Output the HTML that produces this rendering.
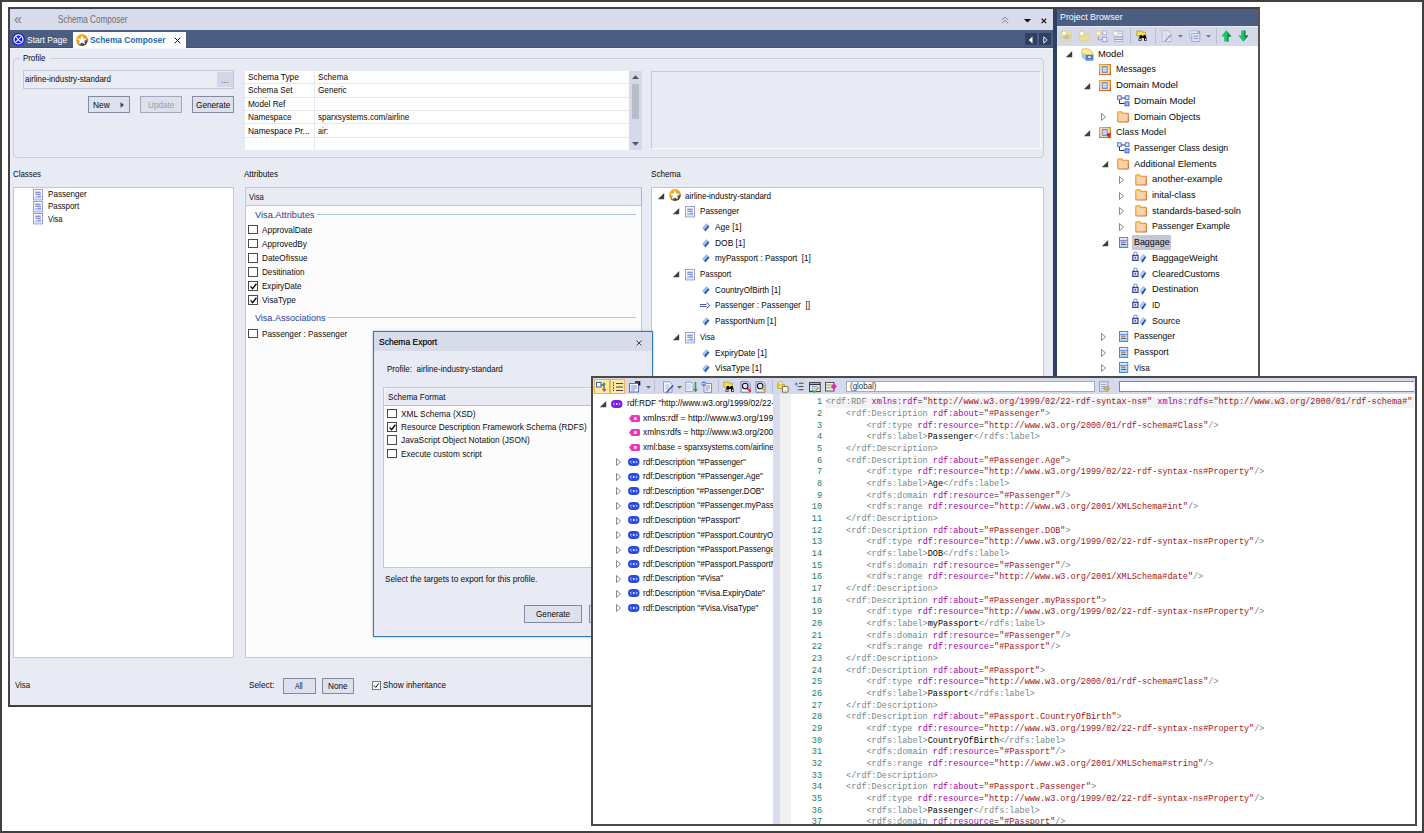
<!DOCTYPE html>
<html lang="en"><head><meta charset="utf-8"><title>Schema Composer</title><style>
html,body{margin:0;padding:0;background:#fff;}
body{width:1424px;height:833px;position:relative;overflow:hidden;font-family:"Liberation Sans",sans-serif;}
#r{position:absolute;left:0;top:0;width:1424px;height:833px;overflow:hidden;}
#r div,#r span,#r svg{position:absolute;}
#r svg{overflow:visible;display:block;}
.t{white-space:pre;line-height:14px;height:14px;transform-origin:0 50%;color:#111;}
.t.c{transform:none;}
.ln{font-family:"Liberation Mono",monospace;font-size:8.5px;line-height:12px;color:#15806a;text-align:right;white-space:pre;}
.cd{font-family:"Liberation Mono",monospace;font-size:8.5px;line-height:12px;white-space:pre;color:#111;}
.cd b{font-weight:normal;}
#frame{position:absolute;left:0;top:0;width:1424px;height:833px;box-sizing:border-box;border:2px solid #404040;pointer-events:none;}
</style></head><body><div id="r">
<svg width="0" height="0" style="left:0;top:0"><defs><linearGradient id="gstar" x1="0.2" y1="0" x2="0.75" y2="1"><stop offset="0" stop-color="#f6b21a"/><stop offset=".55" stop-color="#ee9c10"/><stop offset=".72" stop-color="#6a5a48"/><stop offset="1" stop-color="#2a2a2a"/></linearGradient><linearGradient id="gfold" x1="0" y1="0" x2="1" y2="1"><stop offset="0" stop-color="#eeb020"/><stop offset="1" stop-color="#c8602a"/></linearGradient></defs></svg>
<div style="left:8.0px;top:7.0px;width:1048.0px;height:700.0px;background:#e8ebf4;border:2px solid #424242;box-sizing:border-box;"></div>
<div style="left:10.0px;top:9.0px;width:1043.0px;height:21.0px;background:#d8dcea;"></div>
<div style="left:10.0px;top:30.0px;width:1043.0px;height:18.0px;background:#4b5d80;"></div>
<div style="left:10.0px;top:47.0px;width:1043.0px;height:1.0px;background:#41527a;"></div>
<div style="left:10.0px;top:48.0px;width:1043.0px;height:1.0px;background:#f4f5fa;"></div>
<span class="t" style="left:13.6px;top:12.3px;font-size:15px;transform:scaleX(0.95);color:#7a7a7a;">«</span>
<span class="t" style="left:57.5px;top:13.0px;font-size:10.4px;transform:scaleX(0.7814);color:#6e6e6e;">Schema Composer</span>
<svg style="left:1001.0px;top:16.0px" width="8" height="8" viewBox="0 0 8 8"><path d="M.8 4 L4 1 L7.2 4 M.8 7.4 L4 4.4 L7.2 7.4" fill="none" stroke="#8a8a80" stroke-width="1"/></svg>
<svg style="left:1024.0px;top:19.0px" width="7" height="4" viewBox="0 0 7 4"><path d="M0 0 H7 L3.5 3.6 Z" fill="#080808"/></svg>
<svg style="left:1041.0px;top:18.0px" width="6" height="6" viewBox="0 0 6 6"><path d="M.6 .6 L5.2 5.2 M5.2 .6 L.6 5.2" stroke="#111" stroke-width="1.2"/></svg>
<svg style="left:11.8px;top:33.0px" width="13" height="13" viewBox="0 0 13 13"><circle cx="6.5" cy="6.4" r="6.3" fill="#1414f4"/><circle cx="6.5" cy="6.4" r="4.5" fill="none" stroke="#fff" stroke-width="1.2"/><path d="M3.4 3.2 C6 4.5 5 7 9.6 9.6 M9.6 3.2 C8 5.5 6.4 5.8 3.4 9.6" stroke="#fff" stroke-width="1.1" fill="none"/></svg>
<span class="t" style="left:26.6px;top:33.3px;font-size:8.7px;transform:scaleX(0.979);color:#fff;">Start Page</span>
<div style="left:72.6px;top:31.6px;width:113.2px;height:16.9px;background:#fff;"></div>
<svg style="left:75.5px;top:33.9px" width="12" height="12" viewBox="0 0 12 12"><circle cx="6" cy="6" r="5.9" fill="url(#gstar)"/><polygon points="6.00,1.00 7.35,4.44 11.04,4.66 8.19,7.01 9.12,10.59 6.00,8.60 2.88,10.59 3.81,7.01 0.96,4.66 4.65,4.44" fill="#fff"/></svg>
<span class="t" style="left:89.6px;top:33.3px;font-size:8.7px;transform:scaleX(0.958);color:#1a6ab4;font-weight:bold;">Schema Composer</span>
<svg style="left:174.0px;top:36.5px" width="7" height="7" viewBox="0 0 7 7"><path d="M.7 .7 L6.3 6.3 M6.3 .7 L.7 6.3" stroke="#0c0c0c" stroke-width="1"/></svg>
<div style="left:1025.0px;top:33.3px;width:12.0px;height:11.7px;background:#2f4062;"></div>
<div style="left:1039.0px;top:33.3px;width:12.0px;height:11.7px;background:#2f4062;"></div>
<svg style="left:1028.0px;top:35.5px" width="5" height="8" viewBox="0 0 5 8"><path d="M4.5 .5 V7.5 L.8 4 Z" fill="#fff"/></svg>
<svg style="left:1042.5px;top:35.5px" width="5" height="8" viewBox="0 0 5 8"><path d="M.8 .8 V7.2 L4.2 4 Z" fill="none" stroke="#fff" stroke-width=".9"/></svg>
<div style="left:13.0px;top:58.0px;width:1031.0px;height:100.0px;border:1px solid #c9cdd9;border-radius:4px;box-sizing:border-box;"></div>
<div style="left:20.0px;top:52.0px;width:30.0px;height:12.0px;background:#e8ebf4;"></div>
<span class="t" style="left:23.0px;top:51.4px;font-size:9.8px;transform:scaleX(0.8027);color:#080808;">Profile</span>
<div style="left:23.0px;top:70.0px;width:211.0px;height:18.5px;background:#e9ecf5;border:1px solid #c3c7d3;box-sizing:border-box;"></div>
<span class="t" style="left:24.9px;top:72.0px;font-size:9.8px;transform:scaleX(0.8183);color:#0c0c0c;">airline-industry-standard</span>
<div style="left:217.0px;top:72.0px;width:15.5px;height:14.5px;background:#d3d8e8;"></div>
<span class="t" style="left:221.0px;top:72.7px;font-size:9px;transform:scaleX(1);color:#556;">...</span>
<div style="left:88.2px;top:96.3px;width:42.3px;height:16.5px;background:#dde1ee;border:1px solid #848aa0;box-sizing:border-box;"></div>
<span class="t" style="left:92.7px;top:97.7px;font-size:9.8px;transform:scaleX(0.8516);color:#080808;">New</span>
<svg style="left:119.5px;top:101.5px" width="5" height="6" viewBox="0 0 5 6"><path d="M.5 .3 L4 3 L.5 5.7 Z" fill="#444"/></svg>
<div style="left:140.0px;top:96.3px;width:42.0px;height:16.5px;background:#dde1ee;border:1px solid #a3a8ba;box-sizing:border-box;"></div>
<span class="t" style="left:147.8px;top:97.7px;font-size:9.8px;transform:scaleX(0.8324);color:#9a9ca8;">Update</span>
<div style="left:191.7px;top:96.3px;width:42.1px;height:16.5px;background:#dde1ee;border:1px solid #848aa0;box-sizing:border-box;"></div>
<span class="t" style="left:195.6px;top:97.7px;font-size:9.8px;transform:scaleX(0.8395);color:#080808;">Generate</span>
<div style="left:245.0px;top:70.7px;width:384.0px;height:78.9px;background:#fff;"></div>
<span class="t" style="left:248.4px;top:70.1px;font-size:9.8px;transform:scaleX(0.8521);color:#080808;">Schema Type</span>
<span class="t" style="left:317.9px;top:70.1px;font-size:9.8px;transform:scaleX(0.8344);color:#080808;">Schema</span>
<span class="t" style="left:248.4px;top:83.4px;font-size:9.8px;transform:scaleX(0.8337);color:#080808;">Schema Set</span>
<span class="t" style="left:317.9px;top:83.4px;font-size:9.8px;transform:scaleX(0.8364);color:#080808;">Generic</span>
<span class="t" style="left:248.4px;top:96.8px;font-size:9.8px;transform:scaleX(0.8375);color:#080808;">Model Ref</span>
<span class="t" style="left:248.4px;top:110.1px;font-size:9.8px;transform:scaleX(0.832);color:#080808;">Namespace</span>
<span class="t" style="left:317.9px;top:110.1px;font-size:9.8px;transform:scaleX(0.8292);color:#080808;">sparxsystems.com/airline</span>
<span class="t" style="left:248.4px;top:123.5px;font-size:9.8px;transform:scaleX(0.8492);color:#080808;">Namespace Pr...</span>
<span class="t" style="left:317.9px;top:123.5px;font-size:9.8px;transform:scaleX(0.7413);color:#080808;">air:</span>
<div style="left:245.0px;top:83.3px;width:384.0px;height:1.0px;background:#e6e8f1;"></div>
<div style="left:245.0px;top:96.6px;width:384.0px;height:1.0px;background:#e6e8f1;"></div>
<div style="left:245.0px;top:109.9px;width:384.0px;height:1.0px;background:#e6e8f1;"></div>
<div style="left:245.0px;top:123.2px;width:384.0px;height:1.0px;background:#e6e8f1;"></div>
<div style="left:245.0px;top:136.5px;width:384.0px;height:1.0px;background:#e6e8f1;"></div>
<div style="left:314.0px;top:70.7px;width:1.0px;height:78.9px;background:#e6e8f1;"></div>
<div style="left:629.0px;top:70.7px;width:13.0px;height:78.9px;background:#d5d9ea;"></div>
<div style="left:632.0px;top:84.0px;width:6.8px;height:34.8px;background:#b9bdc9;"></div>
<svg style="left:632.3px;top:75.0px" width="7" height="4" viewBox="0 0 7 4"><path d="M0 4 H7 L3.5 .2 Z" fill="#555"/></svg>
<svg style="left:632.3px;top:141.5px" width="7" height="4" viewBox="0 0 7 4"><path d="M0 0 H7 L3.5 3.8 Z" fill="#555"/></svg>
<div style="left:651.0px;top:70.7px;width:389.5px;height:78.8px;border:1px solid;border-color:#c6cad6 #fbfbfd #fbfbfd #c6cad6;box-sizing:border-box;"></div>
<span class="t" style="left:13.1px;top:167.2px;font-size:9.8px;transform:scaleX(0.8032);color:#080808;">Classes</span>
<span class="t" style="left:244.2px;top:167.3px;font-size:9.8px;transform:scaleX(0.8214);color:#080808;">Attributes</span>
<span class="t" style="left:650.8px;top:167.3px;font-size:9.8px;transform:scaleX(0.8289);color:#080808;">Schema</span>
<div style="left:13.0px;top:187.0px;width:221.0px;height:470.5px;background:#fff;border:1px solid #c3c7d3;box-sizing:border-box;"></div>
<svg style="left:33.0px;top:188.5px" width="10" height="11.4" viewBox="0 0 10 11.4"><rect x=".5" y=".5" width="9" height="10.4" fill="#fff" stroke="#9a9adc"/><path d="M2.2 3.2h5.6M2.2 5.2h5.6" stroke="#5563c4" stroke-width="1"/><path d="M1.6 7h6.8v3H1.6z" fill="#b4ccf4"/><path d="M4.6 7.2h3.4" stroke="#5a78d4" stroke-width=".9"/><path d="M2 9.6h6" stroke="#dfe9fb" stroke-width=".8"/></svg>
<span class="t" style="left:48.2px;top:186.8px;font-size:9.8px;transform:scaleX(0.8283);color:#080808;">Passenger</span>
<svg style="left:33.0px;top:200.9px" width="10" height="11.4" viewBox="0 0 10 11.4"><rect x=".5" y=".5" width="9" height="10.4" fill="#fff" stroke="#9a9adc"/><path d="M2.2 3.2h5.6M2.2 5.2h5.6" stroke="#5563c4" stroke-width="1"/><path d="M1.6 7h6.8v3H1.6z" fill="#b4ccf4"/><path d="M4.6 7.2h3.4" stroke="#5a78d4" stroke-width=".9"/><path d="M2 9.6h6" stroke="#dfe9fb" stroke-width=".8"/></svg>
<span class="t" style="left:48.2px;top:199.3px;font-size:9.8px;transform:scaleX(0.8068);color:#080808;">Passport</span>
<svg style="left:33.0px;top:213.4px" width="10" height="11.4" viewBox="0 0 10 11.4"><rect x=".5" y=".5" width="9" height="10.4" fill="#fff" stroke="#9a9adc"/><path d="M2.2 3.2h5.6M2.2 5.2h5.6" stroke="#5563c4" stroke-width="1"/><path d="M1.6 7h6.8v3H1.6z" fill="#b4ccf4"/><path d="M4.6 7.2h3.4" stroke="#5a78d4" stroke-width=".9"/><path d="M2 9.6h6" stroke="#dfe9fb" stroke-width=".8"/></svg>
<span class="t" style="left:48.2px;top:211.8px;font-size:9.8px;transform:scaleX(0.7676);color:#080808;">Visa</span>
<div style="left:244.5px;top:187.0px;width:397.5px;height:470.5px;background:#fcfcfd;border:1px solid #c3c7d3;box-sizing:border-box;"></div>
<div style="left:245.5px;top:188.0px;width:395.5px;height:18.0px;background:#e8ebf4;border-bottom:1px solid #bfc3cf;box-sizing:border-box;"></div>
<div style="left:641.0px;top:188.0px;width:1.0px;height:18.0px;background:#aeb2c0;"></div>
<span class="t" style="left:249.0px;top:190.2px;font-size:9.8px;transform:scaleX(0.7782);color:#0c0c0c;">Visa</span>
<span class="t" style="left:254.5px;top:207.5px;font-size:9.4px;transform:scaleX(0.9854);color:#2a3ca0;">Visa.Attributes</span>
<div style="left:317.2px;top:213.5px;width:318.8px;height:1.0px;background:#b4c6e4;"></div>
<div style="left:248.2px;top:224.7px;width:9.6px;height:9.6px;background:#fff;border:1px solid #4a4a4a;box-sizing:border-box;"></div>
<span class="t" style="left:262.4px;top:222.7px;font-size:9.8px;transform:scaleX(0.8472);color:#0c0c0c;">ApprovalDate</span>
<div style="left:248.2px;top:238.8px;width:9.6px;height:9.6px;background:#fff;border:1px solid #4a4a4a;box-sizing:border-box;"></div>
<span class="t" style="left:262.4px;top:236.8px;font-size:9.8px;transform:scaleX(0.8431);color:#0c0c0c;">ApprovedBy</span>
<div style="left:248.2px;top:253.0px;width:9.6px;height:9.6px;background:#fff;border:1px solid #4a4a4a;box-sizing:border-box;"></div>
<span class="t" style="left:262.4px;top:251.0px;font-size:9.8px;transform:scaleX(0.8356);color:#0c0c0c;">DateOfIssue</span>
<div style="left:248.2px;top:267.1px;width:9.6px;height:9.6px;background:#fff;border:1px solid #4a4a4a;box-sizing:border-box;"></div>
<span class="t" style="left:262.4px;top:265.1px;font-size:9.8px;transform:scaleX(0.83);color:#0c0c0c;">Desitination</span>
<div style="left:248.2px;top:281.3px;width:9.6px;height:9.6px;background:#fff;border:1px solid #4a4a4a;box-sizing:border-box;"><svg width="9" height="9" viewBox="0 0 9 9" style="left:0;top:0"><path d="M1.6 4.4 L3.6 6.6 L7.4 1.8" fill="none" stroke="#080808" stroke-width="1.4"/></svg></div>
<span class="t" style="left:262.4px;top:279.2px;font-size:9.8px;transform:scaleX(0.8222);color:#0c0c0c;">ExpiryDate</span>
<div style="left:248.2px;top:295.4px;width:9.6px;height:9.6px;background:#fff;border:1px solid #4a4a4a;box-sizing:border-box;"><svg width="9" height="9" viewBox="0 0 9 9" style="left:0;top:0"><path d="M1.6 4.4 L3.6 6.6 L7.4 1.8" fill="none" stroke="#080808" stroke-width="1.4"/></svg></div>
<span class="t" style="left:262.4px;top:293.4px;font-size:9.8px;transform:scaleX(0.8449);color:#0c0c0c;">VisaType</span>
<span class="t" style="left:254.5px;top:311.1px;font-size:9.4px;transform:scaleX(0.9616);color:#2a3ca0;">Visa.Associations</span>
<div style="left:328.0px;top:317.3px;width:308.0px;height:1.0px;background:#b4c6e4;"></div>
<div style="left:248.2px;top:328.9px;width:9.6px;height:9.6px;background:#fff;border:1px solid #4a4a4a;box-sizing:border-box;"></div>
<span class="t" style="left:262.4px;top:326.8px;font-size:9.8px;transform:scaleX(0.8366);color:#0c0c0c;">Passenger : Passenger</span>
<div style="left:651.0px;top:187.0px;width:393.0px;height:470.5px;background:#fff;border:1px solid #c3c7d3;box-sizing:border-box;"></div>
<svg style="left:656.5px;top:191.5px" width="8" height="8" viewBox="0 0 8 8"><path d="M7.2 .9 L7.2 7.3 L.8 7.3 Z" fill="#404040"/></svg>
<svg style="left:669.0px;top:189.4px" width="12" height="12" viewBox="0 0 12 12"><circle cx="6" cy="6" r="5.9" fill="url(#gstar)"/><polygon points="6.00,1.00 7.35,4.44 11.04,4.66 8.19,7.01 9.12,10.59 6.00,8.60 2.88,10.59 3.81,7.01 0.96,4.66 4.65,4.44" fill="#fff"/></svg>
<span class="t" style="left:685.0px;top:188.6px;font-size:9.8px;transform:scaleX(0.8183);color:#080808;">airline-industry-standard</span>
<svg style="left:671.5px;top:207.2px" width="8" height="8" viewBox="0 0 8 8"><path d="M7.2 .9 L7.2 7.3 L.8 7.3 Z" fill="#404040"/></svg>
<svg style="left:685.0px;top:205.9px" width="10" height="11.4" viewBox="0 0 10 11.4"><rect x=".5" y=".5" width="9" height="10.4" fill="#fff" stroke="#9a9adc"/><path d="M2.2 3.2h5.6M2.2 5.2h5.6" stroke="#5563c4" stroke-width="1"/><path d="M1.6 7h6.8v3H1.6z" fill="#b4ccf4"/><path d="M4.6 7.2h3.4" stroke="#5a78d4" stroke-width=".9"/><path d="M2 9.6h6" stroke="#dfe9fb" stroke-width=".8"/></svg>
<span class="t" style="left:700.3px;top:204.2px;font-size:9.8px;transform:scaleX(0.8304);color:#080808;">Passenger</span>
<svg style="left:702.0px;top:223.0px" width="8" height="9" viewBox="0 0 8 9"><path d="M4.5 .5 L7.5 3.5 L3.5 8.5 L.5 5 Z" fill="#2f5fc0"/><path d="M4.5 .5 L6 2.2 L2.2 6.6 L.5 5 Z" fill="#a8c4ee"/></svg>
<span class="t" style="left:715.0px;top:220.0px;font-size:9.8px;transform:scaleX(0.8535);color:#080808;">Age [1]</span>
<svg style="left:702.0px;top:238.7px" width="8" height="9" viewBox="0 0 8 9"><path d="M4.5 .5 L7.5 3.5 L3.5 8.5 L.5 5 Z" fill="#2f5fc0"/><path d="M4.5 .5 L6 2.2 L2.2 6.6 L.5 5 Z" fill="#a8c4ee"/></svg>
<span class="t" style="left:715.0px;top:235.7px;font-size:9.8px;transform:scaleX(0.8606);color:#080808;">DOB [1]</span>
<svg style="left:702.0px;top:254.4px" width="8" height="9" viewBox="0 0 8 9"><path d="M4.5 .5 L7.5 3.5 L3.5 8.5 L.5 5 Z" fill="#2f5fc0"/><path d="M4.5 .5 L6 2.2 L2.2 6.6 L.5 5 Z" fill="#a8c4ee"/></svg>
<span class="t" style="left:715.0px;top:251.3px;font-size:9.8px;transform:scaleX(0.8338);color:#080808;">myPassport : Passport  [1]</span>
<svg style="left:671.5px;top:270.0px" width="8" height="8" viewBox="0 0 8 8"><path d="M7.2 .9 L7.2 7.3 L.8 7.3 Z" fill="#404040"/></svg>
<svg style="left:685.0px;top:268.7px" width="10" height="11.4" viewBox="0 0 10 11.4"><rect x=".5" y=".5" width="9" height="10.4" fill="#fff" stroke="#9a9adc"/><path d="M2.2 3.2h5.6M2.2 5.2h5.6" stroke="#5563c4" stroke-width="1"/><path d="M1.6 7h6.8v3H1.6z" fill="#b4ccf4"/><path d="M4.6 7.2h3.4" stroke="#5a78d4" stroke-width=".9"/><path d="M2 9.6h6" stroke="#dfe9fb" stroke-width=".8"/></svg>
<span class="t" style="left:700.3px;top:267.0px;font-size:9.8px;transform:scaleX(0.8094);color:#080808;">Passport</span>
<svg style="left:702.0px;top:285.8px" width="8" height="9" viewBox="0 0 8 9"><path d="M4.5 .5 L7.5 3.5 L3.5 8.5 L.5 5 Z" fill="#2f5fc0"/><path d="M4.5 .5 L6 2.2 L2.2 6.6 L.5 5 Z" fill="#a8c4ee"/></svg>
<span class="t" style="left:715.0px;top:282.8px;font-size:9.8px;transform:scaleX(0.8354);color:#080808;">CountryOfBirth [1]</span>
<svg style="left:700.0px;top:301.8px" width="11" height="7" viewBox="0 0 11 7"><path d="M0 2.5h6.5M0 4.5h6.5" stroke="#4a55c8" stroke-width="1"/><path d="M6.5 .5 L10 3.5 L6.5 6.5" fill="none" stroke="#4a55c8" stroke-width="1"/></svg>
<span class="t" style="left:715.0px;top:298.4px;font-size:9.8px;transform:scaleX(0.8427);color:#080808;">Passenger : Passenger  []</span>
<svg style="left:702.0px;top:317.2px" width="8" height="9" viewBox="0 0 8 9"><path d="M4.5 .5 L7.5 3.5 L3.5 8.5 L.5 5 Z" fill="#2f5fc0"/><path d="M4.5 .5 L6 2.2 L2.2 6.6 L.5 5 Z" fill="#a8c4ee"/></svg>
<span class="t" style="left:715.0px;top:314.1px;font-size:9.8px;transform:scaleX(0.8387);color:#080808;">PassportNum [1]</span>
<svg style="left:671.5px;top:332.8px" width="8" height="8" viewBox="0 0 8 8"><path d="M7.2 .9 L7.2 7.3 L.8 7.3 Z" fill="#404040"/></svg>
<svg style="left:685.0px;top:331.5px" width="10" height="11.4" viewBox="0 0 10 11.4"><rect x=".5" y=".5" width="9" height="10.4" fill="#fff" stroke="#9a9adc"/><path d="M2.2 3.2h5.6M2.2 5.2h5.6" stroke="#5563c4" stroke-width="1"/><path d="M1.6 7h6.8v3H1.6z" fill="#b4ccf4"/><path d="M4.6 7.2h3.4" stroke="#5a78d4" stroke-width=".9"/><path d="M2 9.6h6" stroke="#dfe9fb" stroke-width=".8"/></svg>
<span class="t" style="left:700.3px;top:329.8px;font-size:9.8px;transform:scaleX(0.7782);color:#080808;">Visa</span>
<svg style="left:702.0px;top:348.6px" width="8" height="9" viewBox="0 0 8 9"><path d="M4.5 .5 L7.5 3.5 L3.5 8.5 L.5 5 Z" fill="#2f5fc0"/><path d="M4.5 .5 L6 2.2 L2.2 6.6 L.5 5 Z" fill="#a8c4ee"/></svg>
<span class="t" style="left:715.0px;top:345.5px;font-size:9.8px;transform:scaleX(0.8418);color:#080808;">ExpiryDate [1]</span>
<svg style="left:702.0px;top:364.3px" width="8" height="9" viewBox="0 0 8 9"><path d="M4.5 .5 L7.5 3.5 L3.5 8.5 L.5 5 Z" fill="#2f5fc0"/><path d="M4.5 .5 L6 2.2 L2.2 6.6 L.5 5 Z" fill="#a8c4ee"/></svg>
<span class="t" style="left:715.0px;top:361.2px;font-size:9.8px;transform:scaleX(0.8654);color:#080808;">VisaType [1]</span>
<span class="t" style="left:15.2px;top:678.1px;font-size:9.8px;transform:scaleX(0.8046);color:#0c0c0c;">Visa</span>
<span class="t" style="left:248.5px;top:678.1px;font-size:9.8px;transform:scaleX(0.8447);color:#0c0c0c;">Select:</span>
<div style="left:283.0px;top:678.3px;width:32.5px;height:15.7px;background:#dde1ee;border:1px solid #848aa0;box-sizing:border-box;"></div>
<span class="t" style="left:295.4px;top:679.3px;font-size:9.8px;transform:scaleX(0.6978);color:#080808;">All</span>
<div style="left:321.8px;top:678.3px;width:32.2px;height:15.7px;background:#dde1ee;border:1px solid #848aa0;box-sizing:border-box;"></div>
<span class="t" style="left:328.1px;top:679.3px;font-size:9.8px;transform:scaleX(0.8326);color:#080808;">None</span>
<div style="left:372.0px;top:680.5px;width:9.0px;height:9.0px;background:#fff;border:1px solid #7a7a7a;box-sizing:border-box;"><svg width="7" height="7" viewBox="0 0 7 7" style="left:0;top:0"><path d="M1 3.4 L2.8 5.4 L6 1.2" fill="none" stroke="#0c0c0c" stroke-width="1"/></svg></div>
<span class="t" style="left:383.4px;top:678.1px;font-size:9.8px;transform:scaleX(0.8409);color:#0c0c0c;">Show inheritance</span>
<div style="left:373.0px;top:331.4px;width:279.5px;height:305.2px;background:#e8ebf4;border:1px solid #2f78b8;box-sizing:border-box;box-shadow:0 0 2px rgba(60,120,180,.5);"></div>
<div style="left:374.0px;top:332.4px;width:277.5px;height:18.8px;background:#d8dcea;"></div>
<span class="t" style="left:378.6px;top:335.0px;font-size:9.8px;transform:scaleX(0.8674);color:#0c0c0c;text-shadow:0 0 .3px #555;">Schema Export</span>
<svg style="left:635.5px;top:339.5px" width="6" height="6" viewBox="0 0 6 6"><path d="M.5 .5 L5.5 5.5 M5.5 .5 L.5 5.5" stroke="#444" stroke-width="1"/></svg>
<span class="t" style="left:387.3px;top:361.6px;font-size:9.8px;transform:scaleX(0.8211);color:#0c0c0c;">Profile:  airline-industry-standard</span>
<div style="left:382.5px;top:387.0px;width:262.5px;height:180.5px;background:#fcfcfd;border:1px solid #c3c7d3;box-sizing:border-box;"></div>
<div style="left:383.5px;top:388.0px;width:260.5px;height:18.0px;background:#e8ebf4;border:1px solid;border-color:#f4f5fa #b9bdc9 #b9bdc9 #f4f5fa;box-sizing:border-box;"></div>
<span class="t" style="left:387.8px;top:389.8px;font-size:9.8px;transform:scaleX(0.8235);color:#0c0c0c;">Schema Format</span>
<div style="left:387.3px;top:408.7px;width:9.6px;height:9.6px;background:#fff;border:1px solid #4a4a4a;box-sizing:border-box;"></div>
<span class="t" style="left:401.2px;top:406.6px;font-size:9.8px;transform:scaleX(0.8492);color:#0c0c0c;">XML Schema (XSD)</span>
<div style="left:387.3px;top:422.0px;width:9.6px;height:9.6px;background:#fff;border:1px solid #4a4a4a;box-sizing:border-box;"><svg width="9" height="9" viewBox="0 0 9 9" style="left:0;top:0"><path d="M1.6 4.4 L3.6 6.6 L7.4 1.8" fill="none" stroke="#080808" stroke-width="1.4"/></svg></div>
<span class="t" style="left:401.2px;top:419.9px;font-size:9.8px;transform:scaleX(0.8447);color:#0c0c0c;">Resource Description Framework Schema (RDFS)</span>
<div style="left:387.3px;top:435.3px;width:9.6px;height:9.6px;background:#fff;border:1px solid #4a4a4a;box-sizing:border-box;"></div>
<span class="t" style="left:401.2px;top:433.2px;font-size:9.8px;transform:scaleX(0.8503);color:#0c0c0c;">JavaScript Object Notation (JSON)</span>
<div style="left:387.3px;top:448.6px;width:9.6px;height:9.6px;background:#fff;border:1px solid #4a4a4a;box-sizing:border-box;"></div>
<span class="t" style="left:401.2px;top:446.5px;font-size:9.8px;transform:scaleX(0.8442);color:#0c0c0c;">Execute custom script</span>
<span class="t" style="left:384.7px;top:572.1px;font-size:9.8px;transform:scaleX(0.8404);color:#0c0c0c;">Select the targets to export for this profile.</span>
<div style="left:523.7px;top:605.0px;width:57.9px;height:17.7px;background:#dde1ee;border:1px solid #848aa0;box-sizing:border-box;"></div>
<span class="t" style="left:535.6px;top:607.0px;font-size:9.8px;transform:scaleX(0.8346);color:#080808;">Generate</span>
<div style="left:589.4px;top:605.0px;width:50.6px;height:17.7px;background:#dde1ee;border:1px solid #848aa0;box-sizing:border-box;"></div>
<span class="t" style="left:603.7px;top:607.0px;font-size:9.8px;transform:scaleX(0.8778);color:#080808;">Close</span>
<div style="left:1053.0px;top:7.0px;width:206.5px;height:373.0px;background:#fff;"></div>
<div style="left:1053.0px;top:7.0px;width:206.5px;height:2.0px;background:#424242;"></div>
<div style="left:1053.0px;top:9.0px;width:205.0px;height:17.0px;background:#4b5d80;"></div>
<div style="left:1053.0px;top:9.0px;width:4.0px;height:371.0px;background:#2e4066;"></div>
<div style="left:1057.0px;top:26.0px;width:201.0px;height:19.6px;background:#d5d9ea;border-top:1px solid #e9ecf6;box-sizing:border-box;"></div>
<div style="left:1258.0px;top:8.0px;width:1.5px;height:372.0px;background:#555;"></div>
<span class="t" style="left:1059.6px;top:10.4px;font-size:9.3px;transform:scaleX(0.9539);color:#fff;">Project Browser</span>
<svg style="left:1065.0px;top:50.3px" width="8" height="8" viewBox="0 0 8 8"><path d="M7.2 .9 L7.2 7.3 L.8 7.3 Z" fill="#404040"/></svg>
<svg style="left:1080.5px;top:48.4px" width="13" height="13" viewBox="0 0 13 13"><path d="M.3 5.2 L4.6 7 V12.6 L1 9.6 Z" fill="#a9c8ee"/><path d="M.3 5.2 L1.2 1.2 L4.4 .3 L9 1.6 L12.2 5 L12.2 7 H4.6 Z" fill="#f8e08c" stroke="#e0b030" stroke-width=".6"/><path d="M2.4 2.6 L5.6 1.8 L10.6 5.2 M1.4 4 L4.8 3.4 L9 6.4" stroke="#fff6c8" stroke-width=".9" fill="none"/><rect x="4.6" y="6.8" width="7.8" height="5.8" fill="#4a7fc8"/><rect x="7" y="8.3" width="3" height="1.5" fill="#eef3fc"/><path d="M5.2 11.8h6.6" stroke="#7ea6de" stroke-width=".8"/></svg>
<span class="t" style="left:1097.6px;top:46.7px;font-size:9.8px;transform:scaleX(0.9593);color:#080808;">Model</span>
<svg style="left:1098.8px;top:64.0px" width="12" height="11.2" viewBox="0 0 12 11.2"><rect x=".6" y=".6" width="10.8" height="9.9" fill="#fbdcbc" stroke="url(#gfold)" stroke-width="1.2"/><rect x="3.3" y="2.6" width="5" height="6" fill="#9fb4e6" stroke="#6f86cc" stroke-width=".8"/><path d="M4 4.4h3.6M4 6.4h3.6" stroke="#f4f7ff" stroke-width=".9"/></svg>
<span class="t" style="left:1115.6px;top:62.4px;font-size:9.8px;transform:scaleX(0.8913);color:#080808;">Messages</span>
<svg style="left:1083.0px;top:81.7px" width="8" height="8" viewBox="0 0 8 8"><path d="M7.2 .9 L7.2 7.3 L.8 7.3 Z" fill="#404040"/></svg>
<svg style="left:1098.8px;top:79.7px" width="12" height="11.2" viewBox="0 0 12 11.2"><rect x=".6" y=".6" width="10.8" height="9.9" fill="#fbdcbc" stroke="url(#gfold)" stroke-width="1.2"/><rect x="3.3" y="2.6" width="5" height="6" fill="#9fb4e6" stroke="#6f86cc" stroke-width=".8"/><path d="M4 4.4h3.6M4 6.4h3.6" stroke="#f4f7ff" stroke-width=".9"/></svg>
<span class="t" style="left:1115.6px;top:78.1px;font-size:9.8px;transform:scaleX(0.9814);color:#080808;">Domain Model</span>
<svg style="left:1116.5px;top:95.0px" width="13" height="12" viewBox="0 0 13 12"><path d="M4 3h4M2.5 5v3.5h5" fill="none" stroke="#333" stroke-width="1"/><rect x=".6" y=".8" width="3.6" height="3.6" fill="#dfe6ff" stroke="#4a60d0" stroke-width=".9"/><rect x="8.2" y=".8" width="3.8" height="3.6" fill="#dfe6ff" stroke="#4a60d0" stroke-width=".9"/><rect x="8" y="6.8" width="4" height="4" fill="#9db8f0" stroke="#3a58c8" stroke-width=".9"/></svg>
<span class="t" style="left:1133.6px;top:93.8px;font-size:9.8px;transform:scaleX(0.9735);color:#080808;">Domain Model</span>
<svg style="left:1099.0px;top:112.2px" width="8" height="10" viewBox="0 0 8 10"><path d="M2.5 1.5 L6.5 5 L2.5 8.5 Z" fill="#fff" stroke="#8a8a8a" stroke-width="1"/></svg>
<svg style="left:1117.0px;top:110.9px" width="12" height="12" viewBox="0 0 12 12"><path d="M.8 2.6 V1.4 Q.8 .7 1.5 .7 H4.4 Q5 .7 5.2 1.3 L5.5 2.2 H10.6 Q11.3 2.2 11.3 2.9 V10.3 Q11.3 11 10.6 11 H1.5 Q.8 11 .8 10.3 Z" fill="#f9d2ac" stroke="url(#gfold)" stroke-width="1.1"/><path d="M1.4 1.3h3.1l.4 1H1.4z" fill="#f2b848"/></svg>
<span class="t" style="left:1133.6px;top:109.5px;font-size:9.8px;transform:scaleX(0.9512);color:#080808;">Domain Objects</span>
<svg style="left:1083.0px;top:128.8px" width="8" height="8" viewBox="0 0 8 8"><path d="M7.2 .9 L7.2 7.3 L.8 7.3 Z" fill="#404040"/></svg>
<svg style="left:1098.8px;top:126.8px" width="12" height="11.2" viewBox="0 0 12 11.2"><rect x=".6" y=".6" width="10.8" height="9.9" fill="#fbdcbc" stroke="url(#gfold)" stroke-width="1.2"/><rect x="3.3" y="2.6" width="5" height="6" fill="#9fb4e6" stroke="#6f86cc" stroke-width=".8"/><path d="M4 4.4h3.6M4 6.4h3.6" stroke="#f4f7ff" stroke-width=".9"/><path d="M7.6 8.2 q1.6 -3.4 4.2 -1.6 l-1.6 4.4 z" fill="#d02424"/></svg>
<span class="t" style="left:1115.6px;top:125.2px;font-size:9.8px;transform:scaleX(0.9257);color:#080808;">Class Model</span>
<svg style="left:1116.5px;top:142.1px" width="13" height="12" viewBox="0 0 13 12"><path d="M4 3h4M2.5 5v3.5h5" fill="none" stroke="#333" stroke-width="1"/><rect x=".6" y=".8" width="3.6" height="3.6" fill="#dfe6ff" stroke="#4a60d0" stroke-width=".9"/><rect x="8.2" y=".8" width="3.8" height="3.6" fill="#dfe6ff" stroke="#4a60d0" stroke-width=".9"/><rect x="8" y="6.8" width="4" height="4" fill="#9db8f0" stroke="#3a58c8" stroke-width=".9"/></svg>
<span class="t" style="left:1133.6px;top:140.9px;font-size:9.8px;transform:scaleX(0.8906);color:#080808;">Passenger Class design</span>
<svg style="left:1101.0px;top:160.2px" width="8" height="8" viewBox="0 0 8 8"><path d="M7.2 .9 L7.2 7.3 L.8 7.3 Z" fill="#404040"/></svg>
<svg style="left:1117.0px;top:158.0px" width="12" height="12" viewBox="0 0 12 12"><path d="M.8 2.6 V1.4 Q.8 .7 1.5 .7 H4.4 Q5 .7 5.2 1.3 L5.5 2.2 H10.6 Q11.3 2.2 11.3 2.9 V10.3 Q11.3 11 10.6 11 H1.5 Q.8 11 .8 10.3 Z" fill="#f9d2ac" stroke="url(#gfold)" stroke-width="1.1"/><path d="M1.4 1.3h3.1l.4 1H1.4z" fill="#f2b848"/></svg>
<span class="t" style="left:1133.6px;top:156.6px;font-size:9.8px;transform:scaleX(0.955);color:#080808;">Additional Elements</span>
<svg style="left:1117.0px;top:175.0px" width="8" height="10" viewBox="0 0 8 10"><path d="M2.5 1.5 L6.5 5 L2.5 8.5 Z" fill="#fff" stroke="#8a8a8a" stroke-width="1"/></svg>
<svg style="left:1135.0px;top:173.7px" width="12" height="12" viewBox="0 0 12 12"><path d="M.8 2.6 V1.4 Q.8 .7 1.5 .7 H4.4 Q5 .7 5.2 1.3 L5.5 2.2 H10.6 Q11.3 2.2 11.3 2.9 V10.3 Q11.3 11 10.6 11 H1.5 Q.8 11 .8 10.3 Z" fill="#f9d2ac" stroke="url(#gfold)" stroke-width="1.1"/><path d="M1.4 1.3h3.1l.4 1H1.4z" fill="#f2b848"/></svg>
<span class="t" style="left:1151.6px;top:172.3px;font-size:9.8px;transform:scaleX(0.9574);color:#080808;">another-example</span>
<svg style="left:1117.0px;top:190.7px" width="8" height="10" viewBox="0 0 8 10"><path d="M2.5 1.5 L6.5 5 L2.5 8.5 Z" fill="#fff" stroke="#8a8a8a" stroke-width="1"/></svg>
<svg style="left:1135.0px;top:189.4px" width="12" height="12" viewBox="0 0 12 12"><path d="M.8 2.6 V1.4 Q.8 .7 1.5 .7 H4.4 Q5 .7 5.2 1.3 L5.5 2.2 H10.6 Q11.3 2.2 11.3 2.9 V10.3 Q11.3 11 10.6 11 H1.5 Q.8 11 .8 10.3 Z" fill="#f9d2ac" stroke="url(#gfold)" stroke-width="1.1"/><path d="M1.4 1.3h3.1l.4 1H1.4z" fill="#f2b848"/></svg>
<span class="t" style="left:1151.6px;top:188.0px;font-size:9.8px;transform:scaleX(0.9555);color:#080808;">inital-class</span>
<svg style="left:1117.0px;top:206.4px" width="8" height="10" viewBox="0 0 8 10"><path d="M2.5 1.5 L6.5 5 L2.5 8.5 Z" fill="#fff" stroke="#8a8a8a" stroke-width="1"/></svg>
<svg style="left:1135.0px;top:205.1px" width="12" height="12" viewBox="0 0 12 12"><path d="M.8 2.6 V1.4 Q.8 .7 1.5 .7 H4.4 Q5 .7 5.2 1.3 L5.5 2.2 H10.6 Q11.3 2.2 11.3 2.9 V10.3 Q11.3 11 10.6 11 H1.5 Q.8 11 .8 10.3 Z" fill="#f9d2ac" stroke="url(#gfold)" stroke-width="1.1"/><path d="M1.4 1.3h3.1l.4 1H1.4z" fill="#f2b848"/></svg>
<span class="t" style="left:1151.6px;top:203.7px;font-size:9.8px;transform:scaleX(0.9435);color:#080808;">standards-based-soln</span>
<svg style="left:1117.0px;top:222.1px" width="8" height="10" viewBox="0 0 8 10"><path d="M2.5 1.5 L6.5 5 L2.5 8.5 Z" fill="#fff" stroke="#8a8a8a" stroke-width="1"/></svg>
<svg style="left:1135.0px;top:220.8px" width="12" height="12" viewBox="0 0 12 12"><path d="M.8 2.6 V1.4 Q.8 .7 1.5 .7 H4.4 Q5 .7 5.2 1.3 L5.5 2.2 H10.6 Q11.3 2.2 11.3 2.9 V10.3 Q11.3 11 10.6 11 H1.5 Q.8 11 .8 10.3 Z" fill="#f9d2ac" stroke="url(#gfold)" stroke-width="1.1"/><path d="M1.4 1.3h3.1l.4 1H1.4z" fill="#f2b848"/></svg>
<span class="t" style="left:1151.6px;top:219.4px;font-size:9.8px;transform:scaleX(0.8918);color:#080808;">Passenger Example</span>
<svg style="left:1101.0px;top:238.7px" width="8" height="8" viewBox="0 0 8 8"><path d="M7.2 .9 L7.2 7.3 L.8 7.3 Z" fill="#404040"/></svg>
<svg style="left:1119.0px;top:236.8px" width="9.4" height="11" viewBox="0 0 9.4 11"><rect x=".5" y=".5" width="8.2" height="10" fill="#c4e6f4" stroke="#5b7fe0"/><path d="M1 1.9h7.2" stroke="#fff" stroke-width="1"/><path d="M1 3.4h7.2" stroke="#5b7fe0" stroke-width=".9"/><path d="M2 5.2h4.6" stroke="#e04848" stroke-width="1.1"/><path d="M2 7.4h5.2" stroke="#50606a" stroke-width="1.1"/><path d="M1 9.2h7.2" stroke="#8ed0e8" stroke-width="1"/></svg>
<div style="left:1132.2px;top:234.9px;width:38.8px;height:14.9px;background:#c4c8d4;"></div>
<span class="t" style="left:1133.6px;top:235.1px;font-size:9.8px;transform:scaleX(0.9074);color:#080808;">Baggage</span>
<svg style="left:1132.0px;top:251.2px" width="15" height="13" viewBox="0 0 15 13"><path d="M1.7 5 V2.8 a1.75 1.75 0 0 1 3.5 0 V5" fill="none" stroke="#6068b8" stroke-width=".9"/><rect x=".8" y="4.4" width="5.2" height="5" fill="#dfe4ff" stroke="#2c3494" stroke-width="1.1"/><rect x="2.7" y="5.8" width="1.3" height="2" fill="#4a54b4"/><path d="M11.3 3.2 L14.2 6.2 L10.6 11.8 L7.9 8 Z" fill="#2449b8"/><path d="M11.3 3.2 L13 5.2 L9.6 9.8 L7.9 8 Z" fill="#b4cdf2"/></svg>
<span class="t" style="left:1151.6px;top:250.8px;font-size:9.8px;transform:scaleX(0.9447);color:#080808;">BaggageWeight</span>
<svg style="left:1132.0px;top:266.9px" width="15" height="13" viewBox="0 0 15 13"><path d="M1.7 5 V2.8 a1.75 1.75 0 0 1 3.5 0 V5" fill="none" stroke="#6068b8" stroke-width=".9"/><rect x=".8" y="4.4" width="5.2" height="5" fill="#dfe4ff" stroke="#2c3494" stroke-width="1.1"/><rect x="2.7" y="5.8" width="1.3" height="2" fill="#4a54b4"/><path d="M11.3 3.2 L14.2 6.2 L10.6 11.8 L7.9 8 Z" fill="#2449b8"/><path d="M11.3 3.2 L13 5.2 L9.6 9.8 L7.9 8 Z" fill="#b4cdf2"/></svg>
<span class="t" style="left:1151.6px;top:266.5px;font-size:9.8px;transform:scaleX(0.9305);color:#080808;">ClearedCustoms</span>
<svg style="left:1132.0px;top:282.6px" width="15" height="13" viewBox="0 0 15 13"><path d="M1.7 5 V2.8 a1.75 1.75 0 0 1 3.5 0 V5" fill="none" stroke="#6068b8" stroke-width=".9"/><rect x=".8" y="4.4" width="5.2" height="5" fill="#dfe4ff" stroke="#2c3494" stroke-width="1.1"/><rect x="2.7" y="5.8" width="1.3" height="2" fill="#4a54b4"/><path d="M11.3 3.2 L14.2 6.2 L10.6 11.8 L7.9 8 Z" fill="#2449b8"/><path d="M11.3 3.2 L13 5.2 L9.6 9.8 L7.9 8 Z" fill="#b4cdf2"/></svg>
<span class="t" style="left:1151.6px;top:282.2px;font-size:9.8px;transform:scaleX(0.9466);color:#080808;">Destination</span>
<svg style="left:1132.0px;top:298.3px" width="15" height="13" viewBox="0 0 15 13"><path d="M1.7 5 V2.8 a1.75 1.75 0 0 1 3.5 0 V5" fill="none" stroke="#6068b8" stroke-width=".9"/><rect x=".8" y="4.4" width="5.2" height="5" fill="#dfe4ff" stroke="#2c3494" stroke-width="1.1"/><rect x="2.7" y="5.8" width="1.3" height="2" fill="#4a54b4"/><path d="M11.3 3.2 L14.2 6.2 L10.6 11.8 L7.9 8 Z" fill="#2449b8"/><path d="M11.3 3.2 L13 5.2 L9.6 9.8 L7.9 8 Z" fill="#b4cdf2"/></svg>
<span class="t" style="left:1151.6px;top:297.9px;font-size:9.8px;transform:scaleX(0.8255);color:#080808;">ID</span>
<svg style="left:1132.0px;top:314.0px" width="15" height="13" viewBox="0 0 15 13"><path d="M1.7 5 V2.8 a1.75 1.75 0 0 1 3.5 0 V5" fill="none" stroke="#6068b8" stroke-width=".9"/><rect x=".8" y="4.4" width="5.2" height="5" fill="#dfe4ff" stroke="#2c3494" stroke-width="1.1"/><rect x="2.7" y="5.8" width="1.3" height="2" fill="#4a54b4"/><path d="M11.3 3.2 L14.2 6.2 L10.6 11.8 L7.9 8 Z" fill="#2449b8"/><path d="M11.3 3.2 L13 5.2 L9.6 9.8 L7.9 8 Z" fill="#b4cdf2"/></svg>
<span class="t" style="left:1151.6px;top:313.6px;font-size:9.8px;transform:scaleX(0.9115);color:#080808;">Source</span>
<svg style="left:1099.0px;top:332.0px" width="8" height="10" viewBox="0 0 8 10"><path d="M2.5 1.5 L6.5 5 L2.5 8.5 Z" fill="#fff" stroke="#8a8a8a" stroke-width="1"/></svg>
<svg style="left:1119.0px;top:331.0px" width="9.4" height="11" viewBox="0 0 9.4 11"><rect x=".5" y=".5" width="8.2" height="10" fill="#c4e6f4" stroke="#5b7fe0"/><path d="M1 1.9h7.2" stroke="#fff" stroke-width="1"/><path d="M1 3.4h7.2" stroke="#5b7fe0" stroke-width=".9"/><path d="M2 5.2h4.6" stroke="#e04848" stroke-width="1.1"/><path d="M2 7.4h5.2" stroke="#50606a" stroke-width="1.1"/><path d="M1 9.2h7.2" stroke="#8ed0e8" stroke-width="1"/></svg>
<span class="t" style="left:1133.6px;top:329.3px;font-size:9.8px;transform:scaleX(0.8753);color:#080808;">Passenger</span>
<svg style="left:1099.0px;top:347.7px" width="8" height="10" viewBox="0 0 8 10"><path d="M2.5 1.5 L6.5 5 L2.5 8.5 Z" fill="#fff" stroke="#8a8a8a" stroke-width="1"/></svg>
<svg style="left:1119.0px;top:346.7px" width="9.4" height="11" viewBox="0 0 9.4 11"><rect x=".5" y=".5" width="8.2" height="10" fill="#c4e6f4" stroke="#5b7fe0"/><path d="M1 1.9h7.2" stroke="#fff" stroke-width="1"/><path d="M1 3.4h7.2" stroke="#5b7fe0" stroke-width=".9"/><path d="M2 5.2h4.6" stroke="#e04848" stroke-width="1.1"/><path d="M2 7.4h5.2" stroke="#50606a" stroke-width="1.1"/><path d="M1 9.2h7.2" stroke="#8ed0e8" stroke-width="1"/></svg>
<span class="t" style="left:1133.6px;top:345.0px;font-size:9.8px;transform:scaleX(0.8973);color:#080808;">Passport</span>
<svg style="left:1099.0px;top:363.4px" width="8" height="10" viewBox="0 0 8 10"><path d="M2.5 1.5 L6.5 5 L2.5 8.5 Z" fill="#fff" stroke="#8a8a8a" stroke-width="1"/></svg>
<svg style="left:1119.0px;top:362.4px" width="9.4" height="11" viewBox="0 0 9.4 11"><rect x=".5" y=".5" width="8.2" height="10" fill="#c4e6f4" stroke="#5b7fe0"/><path d="M1 1.9h7.2" stroke="#fff" stroke-width="1"/><path d="M1 3.4h7.2" stroke="#5b7fe0" stroke-width=".9"/><path d="M2 5.2h4.6" stroke="#e04848" stroke-width="1.1"/><path d="M2 7.4h5.2" stroke="#50606a" stroke-width="1.1"/><path d="M1 9.2h7.2" stroke="#8ed0e8" stroke-width="1"/></svg>
<span class="t" style="left:1133.6px;top:360.7px;font-size:9.8px;transform:scaleX(0.8311);color:#080808;">Visa</span>
<div style="left:590.5px;top:376.0px;width:826.5px;height:450.0px;background:#fff;border:2px solid #4a4a4a;box-sizing:border-box;"></div>
<div style="left:592.5px;top:378.0px;width:822.5px;height:16.3px;background:#d5d9ea;"></div>
<div style="left:773.4px;top:394.3px;width:6.3px;height:429.7px;background:#d9dcec;"></div>
<div style="left:779.7px;top:394.3px;width:11.3px;height:429.7px;background:#f0f0f0;"></div>
<div style="left:825.0px;top:396.6px;width:589.0px;height:11.4px;background:#f3f3f6;"></div>
<div style="left:592.5px;top:394.3px;width:180.9px;height:429.7px;overflow:hidden;background:#fff;">
<svg style="left:6.5px;top:5.6px" width="8" height="8" viewBox="0 0 8 8"><path d="M7.2 .9 L7.2 7.3 L.8 7.3 Z" fill="#404040"/></svg>
<svg style="left:18.8px;top:5.4px" width="11.5" height="8" viewBox="0 0 11.5 8"><rect x="0" y="0" width="11.5" height="8" rx="4" fill="#7a1ee0"/><path d="M3.5 2.8 L2.3 4 L3.5 5.2 M8.0 2.8 L9.2 4 L8.0 5.2" fill="none" stroke="#fff" stroke-width=".8"/><circle cx="5.75" cy="4" r=".9" fill="#fff"/></svg>
<span class="t" style="left:34.2px;top:2.0px;font-size:8.6px;transform:scaleX(0.9703);color:#080808;">rdf:RDF &quot;http://www.w3.org/1999/02/22-rdf-syntax-ns#&quot;</span>
<svg style="left:36.0px;top:20.5px" width="11" height="7" viewBox="0 0 11 7"><path d="M2.6 0 H9.5 Q11 0 11 1.5 V5.5 Q11 7 9.5 7 H2.6 L0 3.5 Z" fill="#e838b8"/><rect x="5" y="2" width="2.6" height="3" fill="#fbd0ee"/></svg>
<span class="t" style="left:50.5px;top:16.6px;font-size:8.6px;transform:scaleX(1.0077);color:#080808;">xmlns:rdf = http://www.w3.org/1999/02/22-rdf-syntax-ns#</span>
<svg style="left:36.0px;top:35.1px" width="11" height="7" viewBox="0 0 11 7"><path d="M2.6 0 H9.5 Q11 0 11 1.5 V5.5 Q11 7 9.5 7 H2.6 L0 3.5 Z" fill="#e838b8"/><rect x="5" y="2" width="2.6" height="3" fill="#fbd0ee"/></svg>
<span class="t" style="left:50.5px;top:31.2px;font-size:8.6px;transform:scaleX(0.9753);color:#080808;">xmlns:rdfs = http://www.w3.org/2000/01/rdf-schema#</span>
<svg style="left:36.0px;top:49.7px" width="11" height="7" viewBox="0 0 11 7"><path d="M2.6 0 H9.5 Q11 0 11 1.5 V5.5 Q11 7 9.5 7 H2.6 L0 3.5 Z" fill="#e838b8"/><rect x="5" y="2" width="2.6" height="3" fill="#fbd0ee"/></svg>
<span class="t" style="left:50.5px;top:45.8px;font-size:8.6px;transform:scaleX(0.9292);color:#080808;">xml:base = sparxsystems.com/airline</span>
<svg style="left:21.8px;top:63.0px" width="8" height="10" viewBox="0 0 8 10"><path d="M2.5 1.5 L6.5 5 L2.5 8.5 Z" fill="#fff" stroke="#8a8a8a" stroke-width="1"/></svg>
<svg style="left:35.5px;top:63.8px" width="11.5" height="8" viewBox="0 0 11.5 8"><rect x="0" y="0" width="11.5" height="8" rx="4" fill="#2a4be0"/><path d="M3.5 2.8 L2.3 4 L3.5 5.2 M8.0 2.8 L9.2 4 L8.0 5.2" fill="none" stroke="#fff" stroke-width=".8"/><circle cx="5.75" cy="4" r=".9" fill="#fff"/></svg>
<span class="t" style="left:50.5px;top:60.4px;font-size:8.6px;transform:scaleX(0.9375);color:#080808;">rdf:Description &quot;#Passenger&quot;</span>
<svg style="left:21.8px;top:77.6px" width="8" height="10" viewBox="0 0 8 10"><path d="M2.5 1.5 L6.5 5 L2.5 8.5 Z" fill="#fff" stroke="#8a8a8a" stroke-width="1"/></svg>
<svg style="left:35.5px;top:78.4px" width="11.5" height="8" viewBox="0 0 11.5 8"><rect x="0" y="0" width="11.5" height="8" rx="4" fill="#2a4be0"/><path d="M3.5 2.8 L2.3 4 L3.5 5.2 M8.0 2.8 L9.2 4 L8.0 5.2" fill="none" stroke="#fff" stroke-width=".8"/><circle cx="5.75" cy="4" r=".9" fill="#fff"/></svg>
<span class="t" style="left:50.5px;top:75.0px;font-size:8.6px;transform:scaleX(0.9435);color:#080808;">rdf:Description &quot;#Passenger.Age&quot;</span>
<svg style="left:21.8px;top:92.2px" width="8" height="10" viewBox="0 0 8 10"><path d="M2.5 1.5 L6.5 5 L2.5 8.5 Z" fill="#fff" stroke="#8a8a8a" stroke-width="1"/></svg>
<svg style="left:35.5px;top:93.0px" width="11.5" height="8" viewBox="0 0 11.5 8"><rect x="0" y="0" width="11.5" height="8" rx="4" fill="#2a4be0"/><path d="M3.5 2.8 L2.3 4 L3.5 5.2 M8.0 2.8 L9.2 4 L8.0 5.2" fill="none" stroke="#fff" stroke-width=".8"/><circle cx="5.75" cy="4" r=".9" fill="#fff"/></svg>
<span class="t" style="left:50.5px;top:89.6px;font-size:8.6px;transform:scaleX(0.9286);color:#080808;">rdf:Description &quot;#Passenger.DOB&quot;</span>
<svg style="left:21.8px;top:106.8px" width="8" height="10" viewBox="0 0 8 10"><path d="M2.5 1.5 L6.5 5 L2.5 8.5 Z" fill="#fff" stroke="#8a8a8a" stroke-width="1"/></svg>
<svg style="left:35.5px;top:107.6px" width="11.5" height="8" viewBox="0 0 11.5 8"><rect x="0" y="0" width="11.5" height="8" rx="4" fill="#2a4be0"/><path d="M3.5 2.8 L2.3 4 L3.5 5.2 M8.0 2.8 L9.2 4 L8.0 5.2" fill="none" stroke="#fff" stroke-width=".8"/><circle cx="5.75" cy="4" r=".9" fill="#fff"/></svg>
<span class="t" style="left:50.5px;top:104.2px;font-size:8.6px;transform:scaleX(0.94);color:#080808;">rdf:Description &quot;#Passenger.myPassport&quot;</span>
<svg style="left:21.8px;top:121.4px" width="8" height="10" viewBox="0 0 8 10"><path d="M2.5 1.5 L6.5 5 L2.5 8.5 Z" fill="#fff" stroke="#8a8a8a" stroke-width="1"/></svg>
<svg style="left:35.5px;top:122.2px" width="11.5" height="8" viewBox="0 0 11.5 8"><rect x="0" y="0" width="11.5" height="8" rx="4" fill="#2a4be0"/><path d="M3.5 2.8 L2.3 4 L3.5 5.2 M8.0 2.8 L9.2 4 L8.0 5.2" fill="none" stroke="#fff" stroke-width=".8"/><circle cx="5.75" cy="4" r=".9" fill="#fff"/></svg>
<span class="t" style="left:50.5px;top:118.8px;font-size:8.6px;transform:scaleX(0.9484);color:#080808;">rdf:Description &quot;#Passport&quot;</span>
<svg style="left:21.8px;top:136.0px" width="8" height="10" viewBox="0 0 8 10"><path d="M2.5 1.5 L6.5 5 L2.5 8.5 Z" fill="#fff" stroke="#8a8a8a" stroke-width="1"/></svg>
<svg style="left:35.5px;top:136.8px" width="11.5" height="8" viewBox="0 0 11.5 8"><rect x="0" y="0" width="11.5" height="8" rx="4" fill="#2a4be0"/><path d="M3.5 2.8 L2.3 4 L3.5 5.2 M8.0 2.8 L9.2 4 L8.0 5.2" fill="none" stroke="#fff" stroke-width=".8"/><circle cx="5.75" cy="4" r=".9" fill="#fff"/></svg>
<span class="t" style="left:50.5px;top:133.4px;font-size:8.6px;transform:scaleX(0.94);color:#080808;">rdf:Description &quot;#Passport.CountryOfBirth&quot;</span>
<svg style="left:21.8px;top:150.6px" width="8" height="10" viewBox="0 0 8 10"><path d="M2.5 1.5 L6.5 5 L2.5 8.5 Z" fill="#fff" stroke="#8a8a8a" stroke-width="1"/></svg>
<svg style="left:35.5px;top:151.4px" width="11.5" height="8" viewBox="0 0 11.5 8"><rect x="0" y="0" width="11.5" height="8" rx="4" fill="#2a4be0"/><path d="M3.5 2.8 L2.3 4 L3.5 5.2 M8.0 2.8 L9.2 4 L8.0 5.2" fill="none" stroke="#fff" stroke-width=".8"/><circle cx="5.75" cy="4" r=".9" fill="#fff"/></svg>
<span class="t" style="left:50.5px;top:148.0px;font-size:8.6px;transform:scaleX(0.94);color:#080808;">rdf:Description &quot;#Passport.Passenger&quot;</span>
<svg style="left:21.8px;top:165.2px" width="8" height="10" viewBox="0 0 8 10"><path d="M2.5 1.5 L6.5 5 L2.5 8.5 Z" fill="#fff" stroke="#8a8a8a" stroke-width="1"/></svg>
<svg style="left:35.5px;top:166.0px" width="11.5" height="8" viewBox="0 0 11.5 8"><rect x="0" y="0" width="11.5" height="8" rx="4" fill="#2a4be0"/><path d="M3.5 2.8 L2.3 4 L3.5 5.2 M8.0 2.8 L9.2 4 L8.0 5.2" fill="none" stroke="#fff" stroke-width=".8"/><circle cx="5.75" cy="4" r=".9" fill="#fff"/></svg>
<span class="t" style="left:50.5px;top:162.6px;font-size:8.6px;transform:scaleX(0.94);color:#080808;">rdf:Description &quot;#Passport.PassportNum&quot;</span>
<svg style="left:21.8px;top:179.8px" width="8" height="10" viewBox="0 0 8 10"><path d="M2.5 1.5 L6.5 5 L2.5 8.5 Z" fill="#fff" stroke="#8a8a8a" stroke-width="1"/></svg>
<svg style="left:35.5px;top:180.6px" width="11.5" height="8" viewBox="0 0 11.5 8"><rect x="0" y="0" width="11.5" height="8" rx="4" fill="#2a4be0"/><path d="M3.5 2.8 L2.3 4 L3.5 5.2 M8.0 2.8 L9.2 4 L8.0 5.2" fill="none" stroke="#fff" stroke-width=".8"/><circle cx="5.75" cy="4" r=".9" fill="#fff"/></svg>
<span class="t" style="left:50.5px;top:177.2px;font-size:8.6px;transform:scaleX(0.94);color:#080808;">rdf:Description &quot;#Visa&quot;</span>
<svg style="left:21.8px;top:194.4px" width="8" height="10" viewBox="0 0 8 10"><path d="M2.5 1.5 L6.5 5 L2.5 8.5 Z" fill="#fff" stroke="#8a8a8a" stroke-width="1"/></svg>
<svg style="left:35.5px;top:195.2px" width="11.5" height="8" viewBox="0 0 11.5 8"><rect x="0" y="0" width="11.5" height="8" rx="4" fill="#2a4be0"/><path d="M3.5 2.8 L2.3 4 L3.5 5.2 M8.0 2.8 L9.2 4 L8.0 5.2" fill="none" stroke="#fff" stroke-width=".8"/><circle cx="5.75" cy="4" r=".9" fill="#fff"/></svg>
<span class="t" style="left:50.5px;top:191.8px;font-size:8.6px;transform:scaleX(0.94);color:#080808;">rdf:Description &quot;#Visa.ExpiryDate&quot;</span>
<svg style="left:21.8px;top:209.0px" width="8" height="10" viewBox="0 0 8 10"><path d="M2.5 1.5 L6.5 5 L2.5 8.5 Z" fill="#fff" stroke="#8a8a8a" stroke-width="1"/></svg>
<svg style="left:35.5px;top:209.8px" width="11.5" height="8" viewBox="0 0 11.5 8"><rect x="0" y="0" width="11.5" height="8" rx="4" fill="#2a4be0"/><path d="M3.5 2.8 L2.3 4 L3.5 5.2 M8.0 2.8 L9.2 4 L8.0 5.2" fill="none" stroke="#fff" stroke-width=".8"/><circle cx="5.75" cy="4" r=".9" fill="#fff"/></svg>
<span class="t" style="left:50.5px;top:206.4px;font-size:8.6px;transform:scaleX(0.94);color:#080808;">rdf:Description &quot;#Visa.VisaType&quot;</span>
</div>
<div style="left:791px;top:394.3px;width:624px;height:429.7px;overflow:hidden;">
<span class="ln" style="left:0;top:1.90px;width:31px">1</span>
<span class="cd" style="left:34.70px;top:1.90px"><b style="color:#768888">&lt;rdf:RDF</b> <b style="color:#a400a8">xmlns:rdf</b><b style="color:#111">=</b><b style="color:#a41414">&quot;http://www.w3.org/1999/02/22-rdf-syntax-ns#&quot;</b> <b style="color:#a400a8">xmlns:rdfs</b><b style="color:#111">=</b><b style="color:#a41414">&quot;http://www.w3.org/2000/01/rdf-schema#&quot;</b></span>
<span class="ln" style="left:0;top:13.57px;width:31px">2</span>
<span class="cd" style="left:55.10px;top:13.57px"><b style="color:#768888">&lt;rdf:Description</b> <b style="color:#a400a8">rdf:about</b><b style="color:#111">=</b><b style="color:#a41414">&quot;#Passenger&quot;</b><b style="color:#768888">&gt;</b></span>
<span class="ln" style="left:0;top:25.24px;width:31px">3</span>
<span class="cd" style="left:75.51px;top:25.24px"><b style="color:#768888">&lt;rdf:type</b> <b style="color:#a400a8">rdf:resource</b><b style="color:#111">=</b><b style="color:#a41414">&quot;http://www.w3.org/2000/01/rdf-schema#Class&quot;</b><b style="color:#768888">/&gt;</b></span>
<span class="ln" style="left:0;top:36.91px;width:31px">4</span>
<span class="cd" style="left:75.51px;top:36.91px"><b style="color:#768888">&lt;rdfs:label&gt;</b><b style="color:#000">Passenger</b><b style="color:#768888">&lt;/rdfs:label&gt;</b></span>
<span class="ln" style="left:0;top:48.58px;width:31px">5</span>
<span class="cd" style="left:55.10px;top:48.58px"><b style="color:#768888">&lt;/rdf:Description&gt;</b></span>
<span class="ln" style="left:0;top:60.25px;width:31px">6</span>
<span class="cd" style="left:55.10px;top:60.25px"><b style="color:#768888">&lt;rdf:Description</b> <b style="color:#a400a8">rdf:about</b><b style="color:#111">=</b><b style="color:#a41414">&quot;#Passenger.Age&quot;</b><b style="color:#768888">&gt;</b></span>
<span class="ln" style="left:0;top:71.92px;width:31px">7</span>
<span class="cd" style="left:75.51px;top:71.92px"><b style="color:#768888">&lt;rdf:type</b> <b style="color:#a400a8">rdf:resource</b><b style="color:#111">=</b><b style="color:#a41414">&quot;http://www.w3.org/1999/02/22-rdf-syntax-ns#Property&quot;</b><b style="color:#768888">/&gt;</b></span>
<span class="ln" style="left:0;top:83.59px;width:31px">8</span>
<span class="cd" style="left:75.51px;top:83.59px"><b style="color:#768888">&lt;rdfs:label&gt;</b><b style="color:#000">Age</b><b style="color:#768888">&lt;/rdfs:label&gt;</b></span>
<span class="ln" style="left:0;top:95.26px;width:31px">9</span>
<span class="cd" style="left:75.51px;top:95.26px"><b style="color:#768888">&lt;rdfs:domain</b> <b style="color:#a400a8">rdf:resource</b><b style="color:#111">=</b><b style="color:#a41414">&quot;#Passenger&quot;</b><b style="color:#768888">/&gt;</b></span>
<span class="ln" style="left:0;top:106.93px;width:31px">10</span>
<span class="cd" style="left:75.51px;top:106.93px"><b style="color:#768888">&lt;rdfs:range</b> <b style="color:#a400a8">rdf:resource</b><b style="color:#111">=</b><b style="color:#a41414">&quot;http://www.w3.org/2001/XMLSchema#int&quot;</b><b style="color:#768888">/&gt;</b></span>
<span class="ln" style="left:0;top:118.60px;width:31px">11</span>
<span class="cd" style="left:55.10px;top:118.60px"><b style="color:#768888">&lt;/rdf:Description&gt;</b></span>
<span class="ln" style="left:0;top:130.27px;width:31px">12</span>
<span class="cd" style="left:55.10px;top:130.27px"><b style="color:#768888">&lt;rdf:Description</b> <b style="color:#a400a8">rdf:about</b><b style="color:#111">=</b><b style="color:#a41414">&quot;#Passenger.DOB&quot;</b><b style="color:#768888">&gt;</b></span>
<span class="ln" style="left:0;top:141.94px;width:31px">13</span>
<span class="cd" style="left:75.51px;top:141.94px"><b style="color:#768888">&lt;rdf:type</b> <b style="color:#a400a8">rdf:resource</b><b style="color:#111">=</b><b style="color:#a41414">&quot;http://www.w3.org/1999/02/22-rdf-syntax-ns#Property&quot;</b><b style="color:#768888">/&gt;</b></span>
<span class="ln" style="left:0;top:153.61px;width:31px">14</span>
<span class="cd" style="left:75.51px;top:153.61px"><b style="color:#768888">&lt;rdfs:label&gt;</b><b style="color:#000">DOB</b><b style="color:#768888">&lt;/rdfs:label&gt;</b></span>
<span class="ln" style="left:0;top:165.28px;width:31px">15</span>
<span class="cd" style="left:75.51px;top:165.28px"><b style="color:#768888">&lt;rdfs:domain</b> <b style="color:#a400a8">rdf:resource</b><b style="color:#111">=</b><b style="color:#a41414">&quot;#Passenger&quot;</b><b style="color:#768888">/&gt;</b></span>
<span class="ln" style="left:0;top:176.95px;width:31px">16</span>
<span class="cd" style="left:75.51px;top:176.95px"><b style="color:#768888">&lt;rdfs:range</b> <b style="color:#a400a8">rdf:resource</b><b style="color:#111">=</b><b style="color:#a41414">&quot;http://www.w3.org/2001/XMLSchema#date&quot;</b><b style="color:#768888">/&gt;</b></span>
<span class="ln" style="left:0;top:188.62px;width:31px">17</span>
<span class="cd" style="left:55.10px;top:188.62px"><b style="color:#768888">&lt;/rdf:Description&gt;</b></span>
<span class="ln" style="left:0;top:200.29px;width:31px">18</span>
<span class="cd" style="left:55.10px;top:200.29px"><b style="color:#768888">&lt;rdf:Description</b> <b style="color:#a400a8">rdf:about</b><b style="color:#111">=</b><b style="color:#a41414">&quot;#Passenger.myPassport&quot;</b><b style="color:#768888">&gt;</b></span>
<span class="ln" style="left:0;top:211.96px;width:31px">19</span>
<span class="cd" style="left:75.51px;top:211.96px"><b style="color:#768888">&lt;rdf:type</b> <b style="color:#a400a8">rdf:resource</b><b style="color:#111">=</b><b style="color:#a41414">&quot;http://www.w3.org/1999/02/22-rdf-syntax-ns#Property&quot;</b><b style="color:#768888">/&gt;</b></span>
<span class="ln" style="left:0;top:223.63px;width:31px">20</span>
<span class="cd" style="left:75.51px;top:223.63px"><b style="color:#768888">&lt;rdfs:label&gt;</b><b style="color:#000">myPassport</b><b style="color:#768888">&lt;/rdfs:label&gt;</b></span>
<span class="ln" style="left:0;top:235.30px;width:31px">21</span>
<span class="cd" style="left:75.51px;top:235.30px"><b style="color:#768888">&lt;rdfs:domain</b> <b style="color:#a400a8">rdf:resource</b><b style="color:#111">=</b><b style="color:#a41414">&quot;#Passenger&quot;</b><b style="color:#768888">/&gt;</b></span>
<span class="ln" style="left:0;top:246.97px;width:31px">22</span>
<span class="cd" style="left:75.51px;top:246.97px"><b style="color:#768888">&lt;rdfs:range</b> <b style="color:#a400a8">rdf:resource</b><b style="color:#111">=</b><b style="color:#a41414">&quot;#Passport&quot;</b><b style="color:#768888">/&gt;</b></span>
<span class="ln" style="left:0;top:258.64px;width:31px">23</span>
<span class="cd" style="left:55.10px;top:258.64px"><b style="color:#768888">&lt;/rdf:Description&gt;</b></span>
<span class="ln" style="left:0;top:270.31px;width:31px">24</span>
<span class="cd" style="left:55.10px;top:270.31px"><b style="color:#768888">&lt;rdf:Description</b> <b style="color:#a400a8">rdf:about</b><b style="color:#111">=</b><b style="color:#a41414">&quot;#Passport&quot;</b><b style="color:#768888">&gt;</b></span>
<span class="ln" style="left:0;top:281.98px;width:31px">25</span>
<span class="cd" style="left:75.51px;top:281.98px"><b style="color:#768888">&lt;rdf:type</b> <b style="color:#a400a8">rdf:resource</b><b style="color:#111">=</b><b style="color:#a41414">&quot;http://www.w3.org/2000/01/rdf-schema#Class&quot;</b><b style="color:#768888">/&gt;</b></span>
<span class="ln" style="left:0;top:293.65px;width:31px">26</span>
<span class="cd" style="left:75.51px;top:293.65px"><b style="color:#768888">&lt;rdfs:label&gt;</b><b style="color:#000">Passport</b><b style="color:#768888">&lt;/rdfs:label&gt;</b></span>
<span class="ln" style="left:0;top:305.32px;width:31px">27</span>
<span class="cd" style="left:55.10px;top:305.32px"><b style="color:#768888">&lt;/rdf:Description&gt;</b></span>
<span class="ln" style="left:0;top:316.99px;width:31px">28</span>
<span class="cd" style="left:55.10px;top:316.99px"><b style="color:#768888">&lt;rdf:Description</b> <b style="color:#a400a8">rdf:about</b><b style="color:#111">=</b><b style="color:#a41414">&quot;#Passport.CountryOfBirth&quot;</b><b style="color:#768888">&gt;</b></span>
<span class="ln" style="left:0;top:328.66px;width:31px">29</span>
<span class="cd" style="left:75.51px;top:328.66px"><b style="color:#768888">&lt;rdf:type</b> <b style="color:#a400a8">rdf:resource</b><b style="color:#111">=</b><b style="color:#a41414">&quot;http://www.w3.org/1999/02/22-rdf-syntax-ns#Property&quot;</b><b style="color:#768888">/&gt;</b></span>
<span class="ln" style="left:0;top:340.33px;width:31px">30</span>
<span class="cd" style="left:75.51px;top:340.33px"><b style="color:#768888">&lt;rdfs:label&gt;</b><b style="color:#000">CountryOfBirth</b><b style="color:#768888">&lt;/rdfs:label&gt;</b></span>
<span class="ln" style="left:0;top:352.00px;width:31px">31</span>
<span class="cd" style="left:75.51px;top:352.00px"><b style="color:#768888">&lt;rdfs:domain</b> <b style="color:#a400a8">rdf:resource</b><b style="color:#111">=</b><b style="color:#a41414">&quot;#Passport&quot;</b><b style="color:#768888">/&gt;</b></span>
<span class="ln" style="left:0;top:363.67px;width:31px">32</span>
<span class="cd" style="left:75.51px;top:363.67px"><b style="color:#768888">&lt;rdfs:range</b> <b style="color:#a400a8">rdf:resource</b><b style="color:#111">=</b><b style="color:#a41414">&quot;http://www.w3.org/2001/XMLSchema#string&quot;</b><b style="color:#768888">/&gt;</b></span>
<span class="ln" style="left:0;top:375.34px;width:31px">33</span>
<span class="cd" style="left:55.10px;top:375.34px"><b style="color:#768888">&lt;/rdf:Description&gt;</b></span>
<span class="ln" style="left:0;top:387.01px;width:31px">34</span>
<span class="cd" style="left:55.10px;top:387.01px"><b style="color:#768888">&lt;rdf:Description</b> <b style="color:#a400a8">rdf:about</b><b style="color:#111">=</b><b style="color:#a41414">&quot;#Passport.Passenger&quot;</b><b style="color:#768888">&gt;</b></span>
<span class="ln" style="left:0;top:398.68px;width:31px">35</span>
<span class="cd" style="left:75.51px;top:398.68px"><b style="color:#768888">&lt;rdf:type</b> <b style="color:#a400a8">rdf:resource</b><b style="color:#111">=</b><b style="color:#a41414">&quot;http://www.w3.org/1999/02/22-rdf-syntax-ns#Property&quot;</b><b style="color:#768888">/&gt;</b></span>
<span class="ln" style="left:0;top:410.35px;width:31px">36</span>
<span class="cd" style="left:75.51px;top:410.35px"><b style="color:#768888">&lt;rdfs:label&gt;</b><b style="color:#000">Passenger</b><b style="color:#768888">&lt;/rdfs:label&gt;</b></span>
<span class="ln" style="left:0;top:422.02px;width:31px">37</span>
<span class="cd" style="left:75.51px;top:422.02px"><b style="color:#768888">&lt;rdfs:domain</b> <b style="color:#a400a8">rdf:resource</b><b style="color:#111">=</b><b style="color:#a41414">&quot;#Passport&quot;</b><b style="color:#768888">/&gt;</b></span>
</div>
<div style="left:594.0px;top:378.5px;width:15.6px;height:15.5px;background:#fce9a6;border:1px solid #e8b84a;box-sizing:border-box;"></div>
<div style="left:610.0px;top:378.5px;width:15.4px;height:15.5px;background:#fce9a6;border:1px solid #e8b84a;box-sizing:border-box;"></div>
<svg style="left:596.0px;top:380.5px" width="12" height="12" viewBox="0 0 12 12"><rect x=".5" y="1.5" width="4.5" height="4.5" fill="#fff" stroke="#4060b0"/><path d="M5 4 H8 V2 M8 4 V9.5" stroke="#333" fill="none"/><path d="M6 8 L8.2 11 L10.4 8 Z" fill="#e030a0"/><path d="M6.2 3.5 L8 1 L9.8 3.5 Z" fill="#30a060"/></svg>
<svg style="left:612.0px;top:380.5px" width="12" height="12" viewBox="0 0 12 12"><path d="M1.5 1 V11" stroke="#444" stroke-dasharray="1.5 1"/><path d="M4 2.5 H11 M4 6 H11 M4 9.5 H11" stroke="#444" stroke-width="1.2"/></svg>
<svg style="left:629.0px;top:380.5px" width="12" height="12" viewBox="0 0 12 12"><rect x=".5" y="2.5" width="9" height="8.5" fill="#f4f6ff" stroke="#5a6fb0"/><path d="M2 5h6M2 7h6M2 9h4" stroke="#6f86c8" stroke-width=".9"/><path d="M6 1 h4.5 v3.5" stroke="#0c0c0c" stroke-width="1.6" fill="none"/></svg>
<svg style="left:646.0px;top:386.2px" width="5" height="3" viewBox="0 0 5 3"><path d="M0 0 H5 L2.5 2.8 Z" fill="#666"/></svg>
<div style="left:654.4px;top:380.0px;width:1.0px;height:12.5px;background:#b9bfd2;"></div>
<svg style="left:662.0px;top:380.5px" width="12" height="12" viewBox="0 0 12 12"><path d="M1.5 .8 H7.5 L10 3.2 V11.2 H1.5 Z" fill="#f7f8ff" stroke="#7f8fc8" stroke-width=".9"/><path d="M3 4h4.5M3 6h5M3 8h4" stroke="#9aa8d8" stroke-width=".8"/><path d="M4.5 10.5 L10.5 4 L11.6 5 L5.8 11.3 L4.2 11.7 Z" fill="#3a50b0"/></svg>
<svg style="left:677.0px;top:386.2px" width="5" height="3" viewBox="0 0 5 3"><path d="M0 0 H5 L2.5 2.8 Z" fill="#666"/></svg>
<svg style="left:684.5px;top:380.5px" width="13" height="12" viewBox="0 0 13 12"><path d="M.8 1.2 H6 L8 3 V10.5 H.8 Z" fill="#f7f8ff" stroke="#7f9fd8" stroke-width=".9"/><path d="M2 4h4M2 6h4.5M2 8h4" stroke="#9ab4e0" stroke-width=".8"/><path d="M10.5 1 V9.5" stroke="#2a9a50" stroke-width="1.5"/><path d="M8.2 8 L10.5 11.5 L12.8 8 Z" fill="#2a9a50"/></svg>
<svg style="left:701.0px;top:380.5px" width="12" height="12" viewBox="0 0 12 12"><path d="M3 2.5 H10.5 V11.3 H3 Z" fill="#f7f8ff" stroke="#6f86c8" stroke-width=".9"/><path d="M4.5 5h4.5M4.5 7h4.5M4.5 9h3" stroke="#c05070" stroke-width=".8"/><circle cx="2.8" cy="2.8" r="2.3" fill="#3a78d8"/><path d="M1.2 2.8h3.2" stroke="#fff"/></svg>
<div style="left:717.5px;top:380.0px;width:1.0px;height:12.5px;background:#b9bfd2;"></div>
<svg style="left:722.5px;top:380.5px" width="13" height="12" viewBox="0 0 13 12"><path d="M.8 1 H5.5 L6.5 2.2 H9.5 V6 H.8 Z" fill="#f4e04a" stroke="#b89a20" stroke-width=".8"/><path d="M4 5 h2 v1h1.5v-1h2 l1.5 4.5 v1.2 h-3 v-2.7 h-2.5 v2.7 h-3 v-1.2 z" fill="#080808"/><rect x="3.3" y="8.6" width="1.4" height="1.6" fill="#fff"/><rect x="9" y="8.6" width="1.4" height="1.6" fill="#fff"/></svg>
<svg style="left:739.5px;top:380.5px" width="12" height="12" viewBox="0 0 12 12"><path d="M1 .8 H8 L10 2.8 V11.2 H1 Z" fill="#f7f8ff" stroke="#5a6fb0" stroke-width=".9"/><circle cx="5.2" cy="5" r="2.8" fill="#dfe8fa" stroke="#0c0c0c" stroke-width="1.1"/><path d="M7.2 7.2 L10.8 10.8" stroke="#e03030" stroke-width="2"/></svg>
<svg style="left:755.0px;top:380.5px" width="12" height="12" viewBox="0 0 12 12"><path d="M1 .8 H8 L10 2.8 V11.2 H1 Z" fill="#f7f8ff" stroke="#5a6fb0" stroke-width=".9"/><circle cx="5.2" cy="5" r="2.8" fill="#dfe8fa" stroke="#0c0c0c" stroke-width="1.1"/><path d="M7.2 7.2 L10.8 10.8" stroke="#e8b020" stroke-width="2"/></svg>
<div style="left:771.5px;top:380.0px;width:1.0px;height:12.5px;background:#b9bfd2;"></div>
<svg style="left:776.5px;top:380.5px" width="12" height="12" viewBox="0 0 12 12"><path d="M.8 2.5 H4.2 L5 3.5 H7.5 V7.5 H.8 Z" fill="#f4e04a" stroke="#b89a20" stroke-width=".8"/><circle cx="3.5" cy="2.2" r="1.8" fill="#fff8c0" stroke="#c8a020" stroke-width=".7"/><path d="M5.5 5.5 h4.5 a1.2 1.2 0 0 1 1.2 1.2 V10 a1.2 1.2 0 0 1 -1.2 1.2 H5.5 Z" fill="#fdf6d0" stroke="#555" stroke-width=".8"/></svg>
<svg style="left:793.5px;top:382.0px" width="10" height="9" viewBox="0 0 10 9"><path d="M.5 2 H3 M1.8 .5 L3.4 2 L1.8 3.5" stroke="#3060c0" fill="none" stroke-width=".9"/><path d="M5 1.2h4.5M5 4.5h4.5M5 7.8h4.5" stroke="#444" stroke-width="1.1"/><path d="M3.5 4.5h1M3.5 7.8h1" stroke="#444"/></svg>
<svg style="left:809.0px;top:380.5px" width="12" height="12" viewBox="0 0 12 12"><rect x=".6" y="1.6" width="10.6" height="9" fill="#f7f8ff" stroke="#333" stroke-width="1"/><path d="M.6 3.4 H11.2" stroke="#333" stroke-width="1.4"/><path d="M2.5 5.5h6M2.5 7.2h4" stroke="#6f86c8" stroke-width=".8"/><path d="M3 9 L5 11 L9.5 6.5" stroke="#2a9a50" stroke-width="1.4" fill="none"/><path d="M5.5 10.5 L9 8" stroke="#e8b020" stroke-width="1.2"/></svg>
<svg style="left:825.0px;top:381.0px" width="12" height="11" viewBox="0 0 12 11"><rect x=".5" y="1.5" width="8.5" height="8.5" fill="#eef6e0" stroke="#444" stroke-width=".9"/><path d="M.5 4h8.5M.5 6.8h8.5" stroke="#6a8a4a" stroke-width=".8"/><path d="M6 5.5 L9 2 L11.8 5.5 L9 9.2 Z" fill="#e030b0"/></svg>
<div style="left:846.0px;top:380.8px;width:248.5px;height:11.0px;background:#fff;border:1px solid #a4a9bc;box-sizing:border-box;"></div>
<span class="t" style="left:849.5px;top:378.7px;font-size:8.6px;transform:scaleX(0.9243);color:#333;">(global)</span>
<svg style="left:1099.0px;top:381.0px" width="11" height="11" viewBox="0 0 11 11"><rect x=".5" y=".8" width="8.5" height="9.4" fill="#dfe6f7" stroke="#8a98c0" stroke-width=".9"/><path d="M2 3.5h5M2 5.5h5M2 7.5h3.5" stroke="#8a98c0" stroke-width=".8"/><path d="M5 6.5 h3 v-1.8 l2.8 2.8 l-2.8 2.8 v-1.8 h-3 z" fill="#d8b840" stroke="#a08820" stroke-width=".5"/></svg>
<div style="left:1119.0px;top:380.8px;width:295.3px;height:11.0px;background:#fff;border:1px solid #7f869c;border-right:none;box-sizing:border-box;"></div>
<svg style="left:1060.0px;top:29.5px" width="12.5" height="12.5" viewBox="0 0 12.5 12.5"><rect x=".8" y="1" width="10.6" height="10.6" fill="#e9de96" stroke="#cfc9c8" stroke-width=".6"/><ellipse cx="6.4" cy="7" rx="3.6" ry="2.2" fill="#b9bce4"/><path d="M4 0.2999999999999998 L5.395 2.005 L7.1 3.4 L5.395 4.795 L4 6.5 L2.605 4.795 L0.8999999999999999 3.4 L2.605 2.005 Z" fill="#fdfcec" stroke="#d9c95e" stroke-width=".9"/></svg>
<svg style="left:1077.5px;top:29.5px" width="12.5" height="12.5" viewBox="0 0 12.5 12.5"><path d="M1.2 5 H7 L8 3.8 H11.6 V11 H1.2 Z" fill="#e9de96" stroke="#d6cf9c" stroke-width=".6"/><path d="M3.8 0.5 L5.195 2.205 L6.9 3.6 L5.195 4.995 L3.8 6.7 L2.405 4.995 L0.6999999999999997 3.6 L2.405 2.205 Z" fill="#fdfcec" stroke="#d9c95e" stroke-width=".9"/></svg>
<svg style="left:1095.0px;top:29.5px" width="13" height="12.5" viewBox="0 0 13 12.5"><path d="M3.4 6 v3.8 h4.6 M5.6 3.4 h2.4" fill="none" stroke="#8f96c4" stroke-width=".9"/><rect x="7.8" y="1" width="3.8" height="3.8" fill="#f0f2fc" stroke="#a3aae0" stroke-width=".8"/><rect x="7.6" y="7.2" width="4.2" height="4.4" fill="#eef1fd" stroke="#8f9ae0" stroke-width=".9"/><path d="M3.4 0.2999999999999998 L4.795 2.005 L6.5 3.4 L4.795 4.795 L3.4 6.5 L2.005 4.795 L0.2999999999999998 3.4 L2.005 2.005 Z" fill="#fdfcec" stroke="#d9c95e" stroke-width=".9"/></svg>
<svg style="left:1112.0px;top:29.5px" width="12.5" height="12.5" viewBox="0 0 12.5 12.5"><rect x="2.4" y="1.2" width="8.4" height="10.4" fill="#e6eafa" stroke="#a9b0dc" stroke-width=".8"/><path d="M2.4 7h8.4M2.4 9.4h8.4" stroke="#8088b8" stroke-width=".9"/><path d="M6 3.4h4" stroke="#b8c8ee" stroke-width="1"/><path d="M3.6 0.5 L4.995 2.205 L6.7 3.6 L4.995 4.995 L3.6 6.7 L2.205 4.995 L0.5 3.6 L2.205 2.205 Z" fill="#fdfcec" stroke="#d9c95e" stroke-width=".9"/></svg>
<div style="left:1130.3px;top:27.5px;width:1.0px;height:16.5px;background:#b9bfd2;"></div>
<svg style="left:1135.5px;top:30.0px" width="13" height="12" viewBox="0 0 13 12"><path d="M.8 1 H5.5 L6.5 2.2 H9.5 V6 H.8 Z" fill="#f4e04a" stroke="#b89a20" stroke-width=".8"/><path d="M4 5 h2 v1h1.5v-1h2 l1.5 4.5 v1.2 h-3 v-2.7 h-2.5 v2.7 h-3 v-1.2 z" fill="#080808"/><rect x="3.3" y="8.6" width="1.4" height="1.6" fill="#fff"/><rect x="9" y="8.6" width="1.4" height="1.6" fill="#fff"/></svg>
<div style="left:1154.6px;top:27.5px;width:1.0px;height:16.5px;background:#b9bfd2;"></div>
<svg style="left:1161.0px;top:30.0px" width="12" height="12.5" viewBox="0 0 12 12.5"><path d="M1.2 .8 H7 L10 3.6 V11.6 H1.2 Z" fill="#e8eaf8" stroke="#b4b8d8" stroke-width=".9"/><path d="M2.6 3.4h3.6M2.6 5.4h4.6M2.6 7.4h3" stroke="#c4c8e0" stroke-width=".8"/><path d="M3.6 10.6 L9.6 4.2 L10.6 5.2 L4.8 11.2 L3.4 11.6 Z" fill="#8e96cc"/></svg>
<svg style="left:1178.3px;top:35.0px" width="5" height="3" viewBox="0 0 5 3"><path d="M0 0 H5 L2.5 2.8 Z" fill="#777"/></svg>
<svg style="left:1189.0px;top:30.0px" width="12.5" height="12.5" viewBox="0 0 12.5 12.5"><rect x=".8" y=".8" width="8" height="7.4" fill="#e4e8f8" stroke="#a8b4e4" stroke-width=".9"/><rect x="9" y=".8" width="2.2" height="5" fill="#9aa0c4"/><rect x="2.8" y="3.6" width="8" height="7.8" fill="#e2e8fa" stroke="#8ea6e4" stroke-width=".9"/><path d="M4.4 6.2h4.8M4.4 8.6h4.8" stroke="#7f8fbc" stroke-width="1"/></svg>
<svg style="left:1205.6px;top:35.0px" width="5" height="3" viewBox="0 0 5 3"><path d="M0 0 H5 L2.5 2.8 Z" fill="#777"/></svg>
<div style="left:1215.5px;top:27.5px;width:1.0px;height:16.5px;background:#b9bfd2;"></div>
<svg style="left:1220.8px;top:30.0px" width="11" height="12" viewBox="0 0 11 12"><path d="M5.2 .3 L10.4 6.4 H7.4 V11.6 H3.2 V6.4 H.2 Z" fill="#1fc466"/><path d="M5.2 .3 L10.4 6.4 H7.4 V11.6 H6.2 V5.2 L7.8 5.2 Z" fill="#0c7a46"/></svg>
<svg style="left:1238.2px;top:30.3px" width="11" height="12" viewBox="0 0 11 12"><path d="M5.2 11.7 L10.4 5.6 H7.4 V.4 H3.2 V5.6 H.2 Z" fill="#1fc466"/><path d="M5.2 11.7 L10.4 5.6 H7.4 V.4 H6.2 V6.8 L7.8 6.8 Z" fill="#0c7a46"/></svg>
<div id="frame"></div></div></body></html>
